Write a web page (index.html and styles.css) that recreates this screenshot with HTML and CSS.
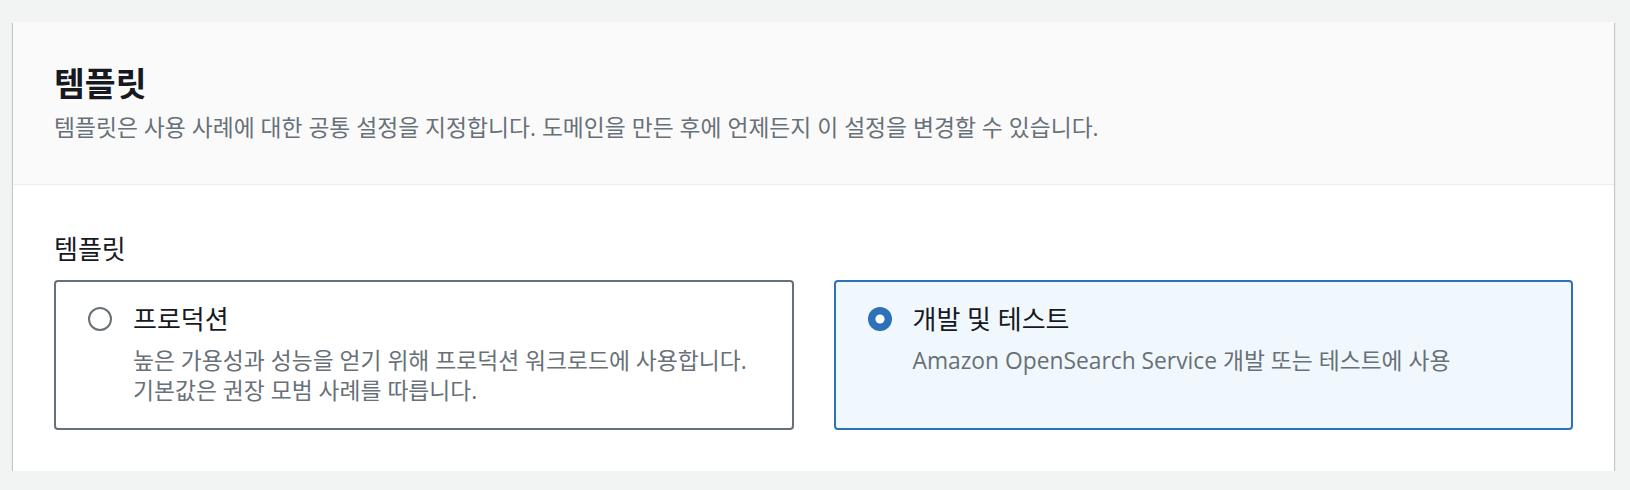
FILE: index.html
```html
<!DOCTYPE html>
<html lang="ko">
<head>
<meta charset="utf-8">
<title>템플릿</title>
<link rel="stylesheet" href="styles.css">
</head>
<body>
<section class="panel">
  <header class="panel-header">
    <h2 class="panel-title">템플릿</h2>
    <p class="panel-desc">템플릿은 사용 사례에 대한 공통 설정을 지정합니다. 도메인을 만든 후에 언제든지 이 설정을 변경할 수 있습니다.</p>
  </header>
  <div class="panel-body">
    <div class="field-label">템플릿</div>
    <div class="tiles">
      <label class="tile">
        <span class="radio">
          <svg width="24" height="24" viewBox="0 0 24 24"><circle cx="12" cy="12" r="11" fill="#fff" stroke="#687078" stroke-width="2"/></svg>
        </span>
        <span class="tile-text">
          <span class="tile-title">프로덕션</span>
          <span class="tile-desc">높은 가용성과 성능을 얻기 위해 프로덕션 워크로드에 사용합니다.<br>기본값은 권장 모범 사례를 따릅니다.</span>
        </span>
      </label>
      <label class="tile tile-selected">
        <span class="radio">
          <svg width="24" height="24" viewBox="0 0 24 24"><circle cx="12" cy="12" r="12" fill="#2f71b8"/><circle cx="12" cy="12" r="4.6" fill="#fff"/></svg>
        </span>
        <span class="tile-text">
          <span class="tile-title">개발 및 테스트</span>
          <span class="tile-desc">Amazon OpenSearch Service 개발 또는 테스트에 사용</span>
        </span>
      </label>
    </div>
  </div>
</section>
</body>
</html>
```
FILE: styles.css
```css
html, body {
  margin: 0;
  background: #f2f3f3;
}
body {
  padding: 22px 16px 0 13px;
  font-family: "Open Sans", "Noto Sans CJK KR", sans-serif;
  color: #16191f;
}
.panel {
  background: #fff;
  box-shadow: 0 1px 1px 0 rgba(0, 28, 36, 0.35), 1px 1px 1px 0 rgba(0, 28, 36, 0.15), -1px 1px 1px 0 rgba(0, 28, 36, 0.15);
}
.panel-header {
  background: #fafafa;
  border-bottom: 1px solid #eaeded;
  padding: 40px 41px 41px 41px;
}
.panel-title {
  margin: 0;
  font-family: "Noto Sans CJK KR", sans-serif;
  font-size: 33.5px;
  line-height: 40px;
  font-weight: 700;
  color: #16191f;
}
.panel-desc {
  margin: 11px 0 0 0;
  font-size: 22.8px;
  line-height: 30px;
  color: #687078;
}
.panel-body {
  padding: 48px 41px 41px 41px;
}
.field-label {
  font-size: 26px;
  line-height: 32px;
  color: #16191f;
  margin-bottom: 15px;
}
.tiles {
  display: grid;
  grid-template-columns: 1fr 1fr;
  gap: 40px;
}
.tile {
  display: flex;
  align-items: flex-start;
  gap: 21px;
  border: 2px solid #687078;
  border-radius: 4px;
  padding: 21px 30px 22px 32px;
  min-height: 150px;
  box-sizing: border-box;
  background: #fff;
}
.tile-selected {
  border-color: #2f71b8;
  background: #f1f8fd;
}
.radio {
  display: flex;
  width: 24px;
  height: 24px;
  margin-top: 4px;
  flex: none;
}
.tile-text {
  display: flex;
  flex-direction: column;
}
.tile-title {
  font-size: 26px;
  line-height: 32px;
  color: #16191f;
}
.tile-desc {
  margin-top: 11px;
  font-size: 22.8px;
  line-height: 30px;
  color: #687078;
}
```
